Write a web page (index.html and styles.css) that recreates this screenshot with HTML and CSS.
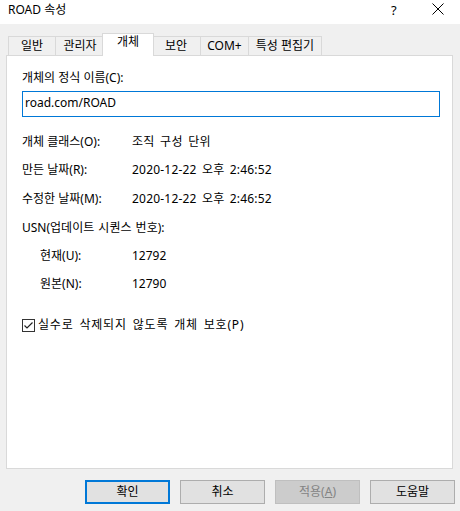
FILE: index.html
```html
<!DOCTYPE html>
<html lang="ko">
<head>
<meta charset="utf-8">
<link rel="stylesheet" href="styles.css">
</head>
<body>
<div class="window">
  <div class="titlebar">
    <span class="title">ROAD 속성</span>
    <span class="help">?</span>
    <span class="close"><svg width="12" height="12" viewBox="0 0 12 12"><path d="M0.5 0.5 L11.5 11.5 M11.5 0.5 L0.5 11.5" stroke="#000" stroke-width="1" fill="none"/></svg></span>
  </div>
  <div class="tabs">
    <div class="tab t1">일반</div>
    <div class="tab t2">관리자</div>
    <div class="tab t3 selected">개체</div>
    <div class="tab t4">보안</div>
    <div class="tab t5">COM+</div>
    <div class="tab t6">특성 편집기</div>
  </div>
  <div class="panel">
    <div class="line">개체의 정식 이름(C):</div>
    <div class="field">road.com/ROAD</div>
    <div class="row r1"><span class="lbl">개체 클래스(O):</span><span class="val wide">조직 구성 단위</span></div>
    <div class="row r2"><span class="lbl">만든 날짜(R):</span><span class="val date">2020-12-22 오후 2:46:52</span></div>
    <div class="row r3"><span class="lbl">수정한 날짜(M):</span><span class="val date">2020-12-22 오후 2:46:52</span></div>
    <div class="row r4"><span class="lbl-free">USN(업데이트 시퀀스 번호):</span></div>
    <div class="row r5 sub"><span class="lbl">현재(U):</span><span class="val">12792</span></div>
    <div class="row r6 sub"><span class="lbl">원본(N):</span><span class="val">12790</span></div>
    <div class="check">
      <span class="box"><svg width="11" height="11" viewBox="0 0 11 11"><path d="M1.5 5.5 L4 8 L9.5 2.5" stroke="#222" stroke-width="1.2" fill="none"/></svg></span>
      <span class="check-text">실수로 삭제되지 않도록 개체 보호(P)</span>
    </div>
  </div>
  <div class="buttons">
    <div class="btn default">확인</div>
    <div class="btn">취소</div>
    <div class="btn disabled">적용(<u>A</u>)</div>
    <div class="btn">도움말</div>
  </div>
</div>
</body>
</html>
```

FILE: styles.css
```css
html, body {
  margin: 0;
  padding: 0;
  background: #f0f0f0;
}
.window {
  width: 460px;
  height: 511px;
  font-family: "Noto Sans", "Noto Sans CJK KR", sans-serif;
  font-size: 12px;
  line-height: 16px;
  color: #000;
  background: #f0f0f0;
  overflow: hidden;
}
.titlebar {
  height: 24px;
  background: #fff;
  display: flex;
  align-items: center;
}
.title {
  margin-left: 8px;
  margin-top: -4px;
  flex: 1;
  font-size: 12px;
}
.help {
  width: 10px;
  margin-right: 31px;
  margin-top: -4px;
  font-size: 13px;
}
.close {
  width: 12px;
  height: 12px;
  margin-right: 16px;
  margin-top: -6px;
  display: flex;
}
.tabs {
  height: 31px;
  display: flex;
  align-items: flex-end;
  padding-left: 8px;
}
.tab {
  box-sizing: border-box;
  height: 19px;
  border: 1px solid #d9d9d9;
  border-bottom: none;
  margin-left: -1px;
  padding-top: 1px;
  text-align: center;
  background: #f0f0f0;
  white-space: nowrap;
}
.t1 { width: 48px; margin-left: 0; }
.t2 { width: 50px; }
.t3 { width: 48px; }
.t4 { width: 50px; }
.t5 { width: 49px; }
.t6 { width: 74px; }
.tab.selected {
  width: 52px;
  height: 23px;
  margin-left: -3px;
  margin-right: -2px;
  margin-bottom: -1px;
  padding-top: 0;
  background: #fff;
  position: relative;
  z-index: 1;
}
.panel {
  box-sizing: border-box;
  margin-left: 6px;
  width: 447px;
  height: 414px;
  border: 1px solid #d9d9d9;
  background: #fff;
  padding: 14px 0 0 15px;
}
.field {
  box-sizing: border-box;
  margin-top: 5px;
  width: 418px;
  height: 26px;
  border: 1px solid #0078d7;
  padding: 3px 0 0 2px;
}
.row {
  display: flex;
  height: 16px;
  white-space: nowrap;
}
.lbl {
  width: 110px;
  flex: none;
}
.lbl-free {
  flex: none;
  word-spacing: 1px;
}
.wide {
  word-spacing: 2px;
  letter-spacing: 0.3px;
}
.date {
  word-spacing: 2px;
  letter-spacing: 0.2px;
}
.sub .lbl {
  width: 92px;
  margin-left: 18px;
}
.r1 { margin-top: 17px; }
.r2 { margin-top: 12px; }
.r3 { margin-top: 13px; }
.r4 { margin-top: 13px; }
.r5 { margin-top: 12px; }
.r6 { margin-top: 12px; }
.check {
  margin-top: 25px;
  display: flex;
  align-items: center;
  height: 16px;
  white-space: nowrap;
}
.check-text {
  letter-spacing: 0.8px;
  word-spacing: 2px;
}
.box {
  box-sizing: border-box;
  width: 13px;
  height: 13px;
  border: 1px solid #333;
  margin-right: 3px;
  display: flex;
  align-items: center;
  justify-content: center;
}
.buttons {
  margin-top: 11px;
  display: flex;
  justify-content: flex-end;
  gap: 10px;
  padding-right: 5px;
}
.btn {
  box-sizing: border-box;
  width: 85px;
  height: 24px;
  border: 1px solid #adadad;
  background: #e1e1e1;
  display: flex;
  align-items: center;
  justify-content: center;
}
.btn.default {
  border: 2px solid #0078d7;
}
.btn.disabled {
  background: #cccccc;
  border-color: #bfbfbf;
  color: #838383;
}
```
